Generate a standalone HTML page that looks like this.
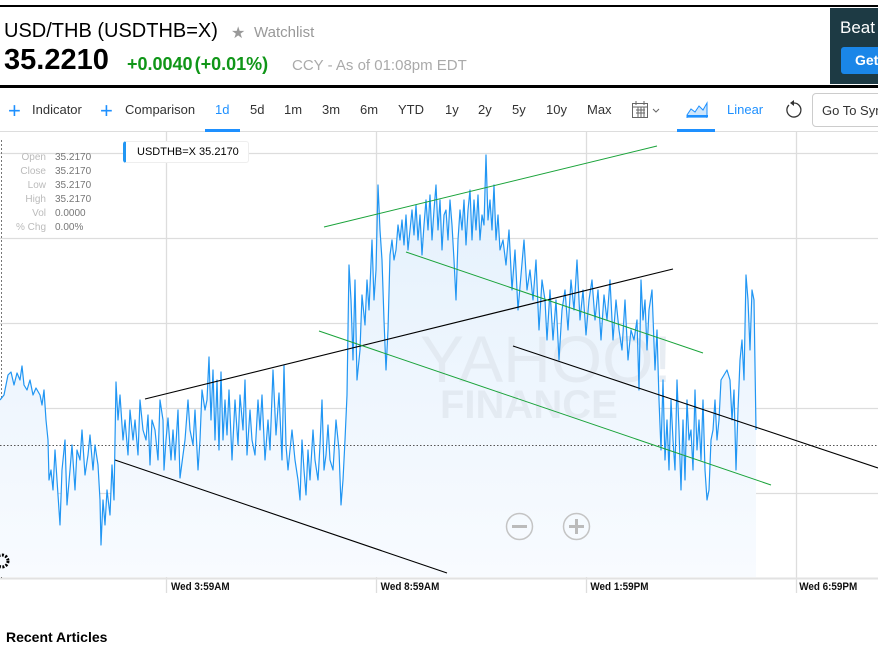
<!DOCTYPE html>
<html><head><meta charset="utf-8"><style>
body{margin:0;width:878px;height:634px;overflow:hidden;background:#fff;font-family:"Liberation Sans",Arial,sans-serif;position:relative}
.a{position:absolute;white-space:nowrap}
.tb{top:102px;font-size:13px;color:#333}
</style></head><body>
<div class="a" style="left:0;top:5px;width:878px;height:2px;background:#000"></div>
<div class="a" style="left:0;top:85px;width:878px;height:3px;background:#000"></div>
<div class="a" style="left:4px;top:20px;font-size:20px;color:#000">USD/THB (USDTHB=X)</div>
<div class="a" style="left:231px;top:23px;font-size:16px;color:#999">★</div>
<div class="a" style="left:254px;top:24px;font-size:15px;color:#999">Watchlist</div>
<div class="a" style="left:4px;top:44px;font-size:29px;font-weight:bold;color:#000">35.2210</div>
<div class="a" style="left:127px;top:54px;font-size:18px;font-weight:bold;color:#109618">+0.0040<span style="margin-left:2px">(+0.01%)</span></div>
<div class="a" style="left:292px;top:57px;font-size:15px;color:#aaa">CCY - As of 01:08pm EDT</div>
<div class="a" style="left:830px;top:8px;width:48px;height:76px;background:#1d3a44"></div>
<div class="a" style="left:840px;top:18px;font-size:17px;color:#fff">Beat</div>
<div class="a" style="left:841px;top:47px;width:37px;height:27px;background:#1a86e8;border-radius:3px 0 0 3px;color:#fff;font-weight:bold;font-size:14px;line-height:27px;padding-left:14px;box-sizing:border-box">Get</div>

<div class="a" style="left:8px;top:100px;font-size:22px;color:#1e90ff;line-height:22px">+</div>
<div class="a tb" style="left:32px">Indicator</div>
<div class="a" style="left:100px;top:100px;font-size:22px;color:#1e90ff;line-height:22px">+</div>
<div class="a tb" style="left:125px">Comparison</div>
<div class="a tb" style="left:215px;color:#1e90ff">1d</div>
<div class="a tb" style="left:250px">5d</div>
<div class="a tb" style="left:284px">1m</div>
<div class="a tb" style="left:322px">3m</div>
<div class="a tb" style="left:360px">6m</div>
<div class="a tb" style="left:398px">YTD</div>
<div class="a tb" style="left:445px">1y</div>
<div class="a tb" style="left:478px">2y</div>
<div class="a tb" style="left:512px">5y</div>
<div class="a tb" style="left:546px">10y</div>
<div class="a tb" style="left:587px">Max</div>
<svg class="a" style="left:631px;top:100px" width="32" height="20"><rect x="1.5" y="3.5" width="15" height="14" fill="none" stroke="#666"/><path d="M1 7h16M5 1v4M13 1v4M5 10h9M5 13h9M7 7v10M10 7v10M13 7v10" stroke="#666" stroke-width="1" fill="none"/><path d="M22 9l3 3 3-3" stroke="#666" fill="none"/></svg>
<svg class="a" style="left:686px;top:100px" width="24" height="18"><path d="M1 15L5 9l4 3 4-6 4 4 4-7v15H1z" fill="#cfe6fb" stroke="#1e90ff"/><path d="M1 16h21" stroke="#1e90ff" stroke-width="2"/></svg>
<div class="a tb" style="left:727px;color:#1e90ff">Linear</div>
<svg class="a" style="left:784px;top:100px" width="20" height="20"><path d="M5 5A7 7 0 1 0 10 3" fill="none" stroke="#333" stroke-width="1.3"/><path d="M10 0v6l-4-3z" fill="#333"/></svg>
<div class="a" style="left:812px;top:93px;width:80px;height:34px;border:1px solid #ccc;border-radius:4px;box-sizing:border-box;font-size:13px;color:#333;padding:9px 0 0 9px">Go To Sym</div>
<div class="a" style="left:0;top:131px;width:878px;height:1px;background:#ddd"></div>
<div class="a" style="left:205px;top:129px;width:35px;height:3px;background:#1e90ff"></div>
<div class="a" style="left:677px;top:129px;width:38px;height:3px;background:#1e90ff"></div>

<svg class="a" style="left:0;top:0" width="878" height="634">
<defs><linearGradient id="g" x1="0" y1="0" x2="0" y2="1"><stop offset="0" stop-color="#e3f0fc"/><stop offset="1" stop-color="#f8fbff"/></linearGradient></defs>
<g stroke="#ddd" stroke-width="1.3">
<path d="M0 153.5H878M0 238.5H878M0 323.5H878M0 408.5H878M0 493.5H878"/>
<path d="M166.5 132V593M376.5 132V593M586.5 132V593M796.5 132V593"/>
</g>
<path d="M0 578.5H878" stroke="#e2e2e2" stroke-width="2"/>
<path d="M1.5 140V578" stroke="#777" stroke-dasharray="2,2"/>
<path d="M0,400 4,395 8,375 11,372 14,385 17,373 20,380 22,366 24,385 27,390 30,380 33,395 36,388 40,395 42,405 44,390 46,420 48,440 49,480 51,470 53,490 55,450 57,480 60,525 62,470 65,440 67,505 70,470 72,445 75,490 77,450 80,460 82,430 85,475 88,455 90,435 93,470 95,445 98,465 100,500 101,545 103,500 105,525 107,490 110,515 112,465 114,500 116,382 118,420 120,395 123,440 125,420 128,455 130,410 133,440 135,420 138,455 140,400 143,430 146,440 148,415 150,465 152,420 155,430 158,460 160,400 163,420 164,470 166,440 168,418 171,460 173,430 175,460 178,410 180,478 183,455 185,440 188,400 190,430 193,445 195,410 198,470 200,440 202,390 205,410 207,400 209,357 211,420 213,370 215,440 217,380 219,450 221,372 223,440 225,400 227,435 229,390 232,460 235,400 238,445 240,395 243,430 245,380 247,455 250,410 252,440 255,455 258,400 260,430 262,395 265,460 268,420 270,450 273,370 276,435 279,393 282,460 284,365 286,445 288,470 292,430 295,460 298,480 300,500 302,440 304,470 306,495 308,450 310,480 313,430 315,460 318,480 320,445 322,400 324,470 326,455 328,425 330,460 333,470 336,420 339,450 341,505 343,480 345,440 347,395 349,265 351,300 353,360 355,280 357,380 360,350 362,295 365,325 367,280 369,310 372,240 374,300 376,270 378,185 380,230 382,260 384,320 386,370 388,330 390,255 392,240 394,260 396,250 398,225 400,240 402,220 404,245 406,215 408,250 410,230 412,210 414,235 416,205 418,240 420,215 422,255 424,225 426,200 428,230 430,195 432,240 434,210 436,185 438,230 440,200 442,250 444,215 446,210 448,240 450,200 452,225 454,260 456,300 458,240 460,210 462,230 464,200 466,245 468,210 470,190 472,240 474,200 476,230 478,195 480,240 482,215 484,225 486,155 488,220 490,200 492,230 494,185 496,240 498,215 500,250 503,240 506,265 509,230 512,290 515,250 518,310 521,275 524,240 527,290 530,270 533,300 536,260 539,330 542,280 545,300 547,340 550,290 553,340 556,300 559,360 562,310 565,290 568,330 571,280 574,310 577,260 580,320 583,290 586,335 589,300 592,280 595,320 598,290 601,340 604,295 607,320 610,280 613,340 616,300 619,330 622,350 625,300 628,360 631,330 634,340 637,320 639,390 641,280 643,320 645,300 647,350 649,310 652,290 655,370 657,330 659,400 661,450 663,380 665,460 667,420 669,470 671,400 673,440 675,470 677,380 679,430 681,490 683,420 685,480 687,400 689,440 691,430 693,470 695,390 697,450 699,420 701,460 703,400 705,470 707,500 709,490 711,440 713,430 715,400 717,440 719,420 721,380 724,375 727,370 730,380 732,420 734,390 736,470 738,410 740,360 742,340 744,380 746,275 748,300 750,350 752,290 754,300 756,430 756,577 0,577Z" fill="url(#g)"/>
<text x="420" y="382" font-family="Liberation Sans" font-size="66" fill="#dfe6ee" opacity="0.7">YAHOO!</text>
<text x="440" y="418" font-family="Liberation Sans" font-size="40" font-weight="bold" fill="#dfe6ee" opacity="0.7">FINANCE</text>
<path d="M0 445.5H878" stroke="#555" stroke-dasharray="1.5,2"/>
<path d="M0,400 4,395 8,375 11,372 14,385 17,373 20,380 22,366 24,385 27,390 30,380 33,395 36,388 40,395 42,405 44,390 46,420 48,440 49,480 51,470 53,490 55,450 57,480 60,525 62,470 65,440 67,505 70,470 72,445 75,490 77,450 80,460 82,430 85,475 88,455 90,435 93,470 95,445 98,465 100,500 101,545 103,500 105,525 107,490 110,515 112,465 114,500 116,382 118,420 120,395 123,440 125,420 128,455 130,410 133,440 135,420 138,455 140,400 143,430 146,440 148,415 150,465 152,420 155,430 158,460 160,400 163,420 164,470 166,440 168,418 171,460 173,430 175,460 178,410 180,478 183,455 185,440 188,400 190,430 193,445 195,410 198,470 200,440 202,390 205,410 207,400 209,357 211,420 213,370 215,440 217,380 219,450 221,372 223,440 225,400 227,435 229,390 232,460 235,400 238,445 240,395 243,430 245,380 247,455 250,410 252,440 255,455 258,400 260,430 262,395 265,460 268,420 270,450 273,370 276,435 279,393 282,460 284,365 286,445 288,470 292,430 295,460 298,480 300,500 302,440 304,470 306,495 308,450 310,480 313,430 315,460 318,480 320,445 322,400 324,470 326,455 328,425 330,460 333,470 336,420 339,450 341,505 343,480 345,440 347,395 349,265 351,300 353,360 355,280 357,380 360,350 362,295 365,325 367,280 369,310 372,240 374,300 376,270 378,185 380,230 382,260 384,320 386,370 388,330 390,255 392,240 394,260 396,250 398,225 400,240 402,220 404,245 406,215 408,250 410,230 412,210 414,235 416,205 418,240 420,215 422,255 424,225 426,200 428,230 430,195 432,240 434,210 436,185 438,230 440,200 442,250 444,215 446,210 448,240 450,200 452,225 454,260 456,300 458,240 460,210 462,230 464,200 466,245 468,210 470,190 472,240 474,200 476,230 478,195 480,240 482,215 484,225 486,155 488,220 490,200 492,230 494,185 496,240 498,215 500,250 503,240 506,265 509,230 512,290 515,250 518,310 521,275 524,240 527,290 530,270 533,300 536,260 539,330 542,280 545,300 547,340 550,290 553,340 556,300 559,360 562,310 565,290 568,330 571,280 574,310 577,260 580,320 583,290 586,335 589,300 592,280 595,320 598,290 601,340 604,295 607,320 610,280 613,340 616,300 619,330 622,350 625,300 628,360 631,330 634,340 637,320 639,390 641,280 643,320 645,300 647,350 649,310 652,290 655,370 657,330 659,400 661,450 663,380 665,460 667,420 669,470 671,400 673,440 675,470 677,380 679,430 681,490 683,420 685,480 687,400 689,440 691,430 693,470 695,390 697,450 699,420 701,460 703,400 705,470 707,500 709,490 711,440 713,430 715,400 717,440 719,420 721,380 724,375 727,370 730,380 732,420 734,390 736,470 738,410 740,360 742,340 744,380 746,275 748,300 750,350 752,290 754,300 756,430" fill="none" stroke="#2196f3" stroke-width="1.2" stroke-linejoin="round"/>
<g stroke="#000" stroke-width="1.1"><path d="M145 399L673 269M115 460L447 573M513 346L878 468"/></g>
<g stroke="#1aa33a" stroke-width="1"><path d="M324 227L657 146M406 252L703 353M319 331L771 485"/></g>
<circle cx="519.5" cy="526.5" r="13" fill="none" stroke="#c4c4c4" stroke-width="1.5"/><path d="M512 526.5h15" stroke="#bbb" stroke-width="3"/>
<circle cx="576.5" cy="526.5" r="13" fill="none" stroke="#c4c4c4" stroke-width="1.5"/><path d="M569 526.5h15M576.5 519v15" stroke="#bbb" stroke-width="3"/>
<circle cx="2" cy="561" r="6" fill="none" stroke="#000" stroke-width="3" stroke-dasharray="2,1.5"/>
<text font-family="Liberation Sans" font-size="11" font-weight="bold" fill="#111" transform="scale(0.9,1)"><tspan x="190" y="590">Wed 3:59AM</tspan><tspan x="423" y="590">Wed 8:59AM</tspan><tspan x="656" y="590">Wed 1:59PM</tspan><tspan x="888" y="590">Wed 6:59PM</tspan></text>
</svg>
<div class="a" style="left:123px;top:141px;width:126px;height:22px;background:#fff;border:1px solid #eee;border-left:3px solid #2196f3;border-radius:3px;box-sizing:border-box;font-size:11px;color:#000;padding:4px 0 0 11px">USDTHB=X 35.2170</div>
<div class="a" style="left:8px;top:151px;font-size:10px;color:#bbb;line-height:14px;text-align:right;width:38px">Open<br>Close<br>Low<br>High<br>Vol<br>% Chg</div>
<div class="a" style="left:55px;top:151px;font-size:10px;color:#777;line-height:14px">35.2170<br>35.2170<br>35.2170<br>35.2170<br>0.0000<br>0.00%</div>
<div class="a" style="left:6px;top:629px;font-size:14px;font-weight:bold;color:#000">Recent Articles</div>
</body></html>
